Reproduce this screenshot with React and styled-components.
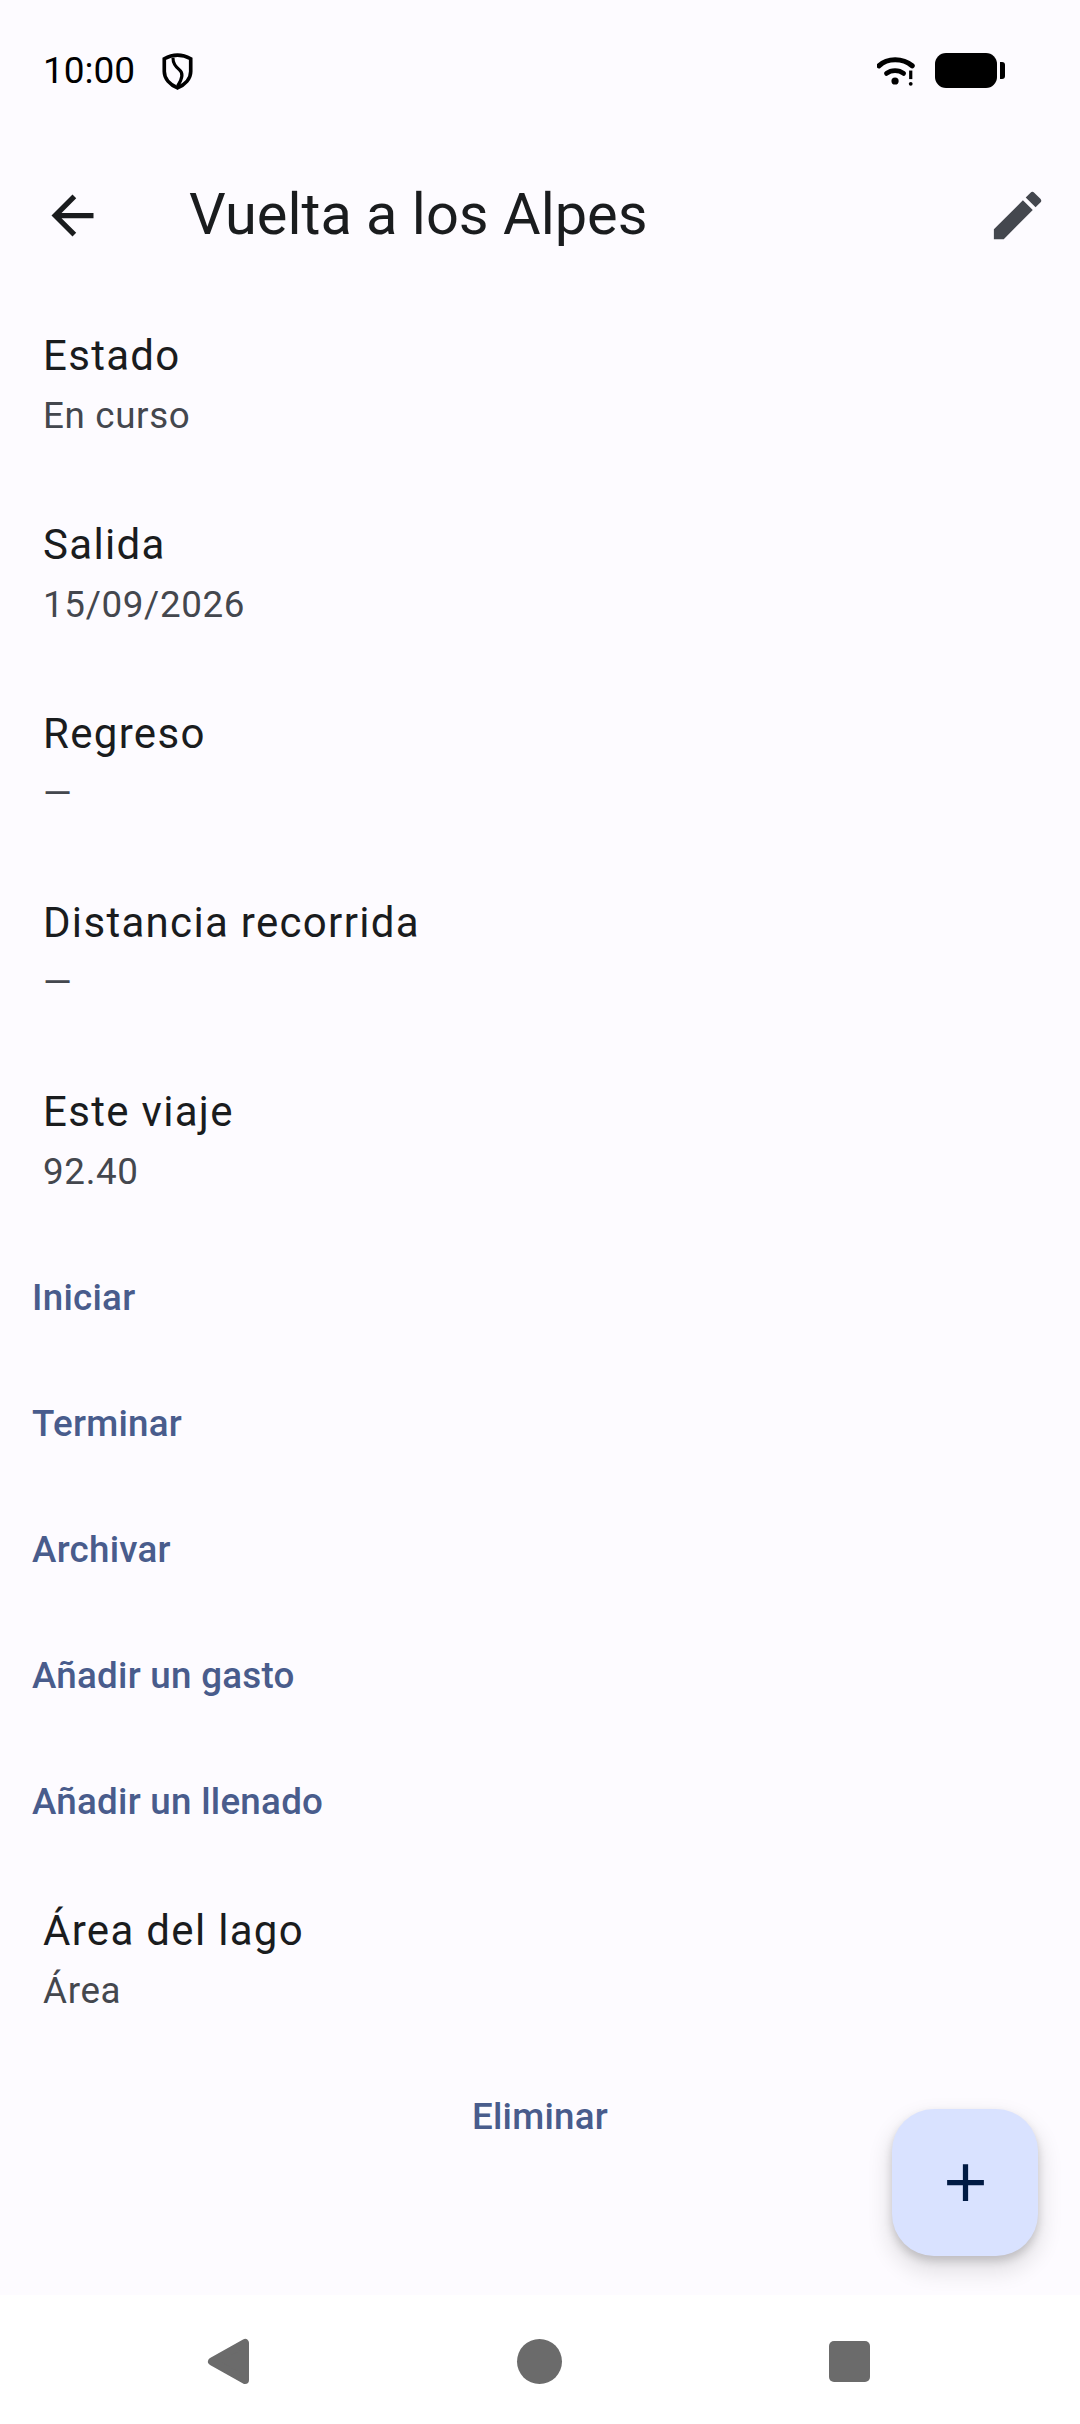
import React from "react";
import styled, { createGlobalStyle } from "styled-components";

const GlobalStyle = createGlobalStyle`
  html, body {
    margin: 0;
    padding: 0;
    background: #fdfbff;
  }
  * {
    box-sizing: border-box;
  }
`;

const Screen = styled.div`
  position: relative;
  width: 1080px;
  height: 2424px;
  display: flex;
  flex-direction: column;
  overflow: hidden;
  background: #fdfbff;
  font-family: Roboto, "Liberation Sans", sans-serif;
`;

const StatusBar = styled.div`
  height: 131px;
  padding: 11px 75px 0 43px;
  display: flex;
  align-items: center;
  justify-content: space-between;
  color: #000;
`;

const StatusGroup = styled.div`
  display: flex;
  align-items: center;
  gap: ${(p) => p.$gap}px;
`;

const Time = styled.span`
  font-size: 37px;
  line-height: 44px;
`;

const AppBar = styled.div`
  height: 168px;
  padding: 0 0 0 9px;
  display: flex;
  align-items: center;
`;

const IconButton = styled.button`
  width: 126px;
  height: 126px;
  flex: none;
  border: 0;
  padding: 0;
  background: none;
  display: flex;
  align-items: center;
  justify-content: center;
  color: ${(p) => p.$color};
`;

const Title = styled.h1`
  flex: 1;
  margin: 0 0 2px 54px;
  font-size: 57.75px;
  line-height: 76px;
  font-weight: 400;
  color: #1a1c1e;
`;

const Content = styled.main`
  flex: 1;
  margin-top: -9px;
  display: flex;
  flex-direction: column;
`;

const Row = styled.div`
  height: 189px;
  padding: 0 43px 3px;
  display: flex;
  flex-direction: column;
  justify-content: center;
`;

const RowLabel = styled.div`
  font-size: 42px;
  line-height: 63px;
  letter-spacing: 1.31px;
  margin-bottom: 3px;
  color: #1a1c1e;
`;

const RowValue = styled.div`
  font-size: 36.75px;
  line-height: 52px;
  letter-spacing: 0.66px;
  color: #44474e;
`;

const ActionRow = styled.div`
  height: 126px;
  padding: 0 32px;
  display: flex;
  align-items: center;
  justify-content: ${(p) => (p.$center ? "center" : "flex-start")};
`;

const LinkButton = styled.button`
  border: 0;
  padding: 0;
  background: none;
  font-family: inherit;
  font-size: 36.75px;
  line-height: 52px;
  font-weight: 500;
  letter-spacing: 0.26px;
  color: #495c8c;
`;

const Fab = styled.button`
  position: absolute;
  left: 892px;
  top: 2109px;
  width: 146px;
  height: 147px;
  border: 0;
  border-radius: 42px;
  padding: 0;
  background: #d9e2ff;
  color: #001a43;
  display: flex;
  align-items: center;
  justify-content: center;
  box-shadow: 0 12px 22px 4px rgba(0, 0, 0, 0.11), 0 5px 8px rgba(0, 0, 0, 0.16);
`;

const NavBar = styled.nav`
  height: 129px;
  flex: none;
  background: #fff;
  padding: 4px 199px 0 197px;
  display: flex;
  align-items: center;
  justify-content: space-between;
  position: relative;
`;

const NavIcon = styled.svg`
  width: 63px;
  height: 63px;
  fill: #6b6b6b;
  display: block;
`;

const Shield = () => (
  <svg width="31" height="37" viewBox="0 0 34 40" fill="none" stroke="#000" strokeWidth="4">
    <path d="M17 2 C22 2 27 3.5 31.5 6 V20 C31.5 28 25 34.5 17 38 C9 34.5 2.5 28 2.5 20 V6 C7 3.5 12 2 17 2 Z" />
    <path d="M12 5 C12 12 15 15 19 18 C23 21 23 27 17 36" strokeWidth="3.4" />
  </svg>
);

const Wifi = () => (
  <svg width="38" height="31" viewBox="0 0 40 32" fill="none" stroke="#000" strokeLinecap="round">
    <path d="M2 10 C11 1.5 27 1.5 37 10" strokeWidth="5.5" />
    <path d="M10 18 C15 14 23 14 28 18" strokeWidth="5" />
    <circle cx="19" cy="26" r="3.8" fill="#000" stroke="none" />
    <path d="M35.5 15 V24" strokeWidth="3.4" strokeLinecap="butt" />
    <circle cx="35.5" cy="29" r="2" fill="#000" stroke="none" />
  </svg>
);

const Battery = () => (
  <svg width="70" height="36" viewBox="0 0 70 36">
    <rect x="0" y="0" width="62" height="35" rx="11" fill="#000" />
    <path d="M65 9 H67 Q70 9 70 12 V23 Q70 26 67 26 H65 Z" fill="#000" />
  </svg>
);

const BackIcon = () => (
  <svg width="63" height="63" viewBox="0 0 24 24" fill="currentColor">
    <path d="M20 11H7.83l5.59-5.59L12 4l-8 8 8 8 1.41-1.41L7.83 13H20v-2z" />
  </svg>
);

const EditIcon = () => (
  <svg width="63" height="63" viewBox="0 0 24 24" fill="currentColor">
    <path d="M3 17.25V21h3.75L17.81 9.94l-3.75-3.75L3 17.25zM20.71 7.04a.996.996 0 0 0 0-1.41l-2.34-2.34a.996.996 0 0 0-1.41 0l-1.83 1.83 3.75 3.75 1.83-1.83z" />
  </svg>
);

const PlusIcon = () => (
  <svg width="63" height="63" viewBox="0 0 24 24" fill="currentColor">
    <path d="M19 13h-6v6h-2v-6H5v-2h6V5h2v6h6v2z" />
  </svg>
);

const details = [
  { label: "Estado", value: "En curso" },
  { label: "Salida", value: "15/09/2026" },
  { label: "Regreso", value: "—" },
  { label: "Distancia recorrida", value: "—" },
  { label: "Este viaje", value: "92.40" },
];

const actions = ["Iniciar", "Terminar", "Archivar", "Añadir un gasto", "Añadir un llenado"];

export default function App() {
  return (
    <Screen>
      <GlobalStyle />
      <StatusBar>
        <StatusGroup $gap={27}>
          <Time>10:00</Time>
          <Shield />
        </StatusGroup>
        <StatusGroup $gap={20}>
          <Wifi />
          <Battery />
        </StatusGroup>
      </StatusBar>
      <AppBar>
        <IconButton $color="#1a1c1e" aria-label="Volver">
          <BackIcon />
        </IconButton>
        <Title>Vuelta a los Alpes</Title>
        <IconButton $color="#44474e" aria-label="Editar">
          <EditIcon />
        </IconButton>
      </AppBar>
      <Content>
        {details.map((d) => (
          <Row key={d.label}>
            <RowLabel>{d.label}</RowLabel>
            <RowValue>{d.value}</RowValue>
          </Row>
        ))}
        {actions.map((a) => (
          <ActionRow key={a}>
            <LinkButton>{a}</LinkButton>
          </ActionRow>
        ))}
        <Row>
          <RowLabel>Área del lago</RowLabel>
          <RowValue>Área</RowValue>
        </Row>
        <ActionRow $center>
          <LinkButton>Eliminar</LinkButton>
        </ActionRow>
      </Content>
      <NavBar>
        <NavIcon viewBox="0 0 63 63">
          <polygon points="15,31.5 48,13 48,50" stroke="#6b6b6b" strokeWidth="8" strokeLinejoin="round" />
        </NavIcon>
        <NavIcon viewBox="0 0 63 63">
          <circle cx="31.5" cy="31.5" r="22.5" />
        </NavIcon>
        <NavIcon viewBox="0 0 63 63">
          <rect x="11" y="11" width="41" height="41" rx="5" />
        </NavIcon>
      </NavBar>
      <Fab aria-label="Añadir">
        <PlusIcon />
      </Fab>
    </Screen>
  );
}
